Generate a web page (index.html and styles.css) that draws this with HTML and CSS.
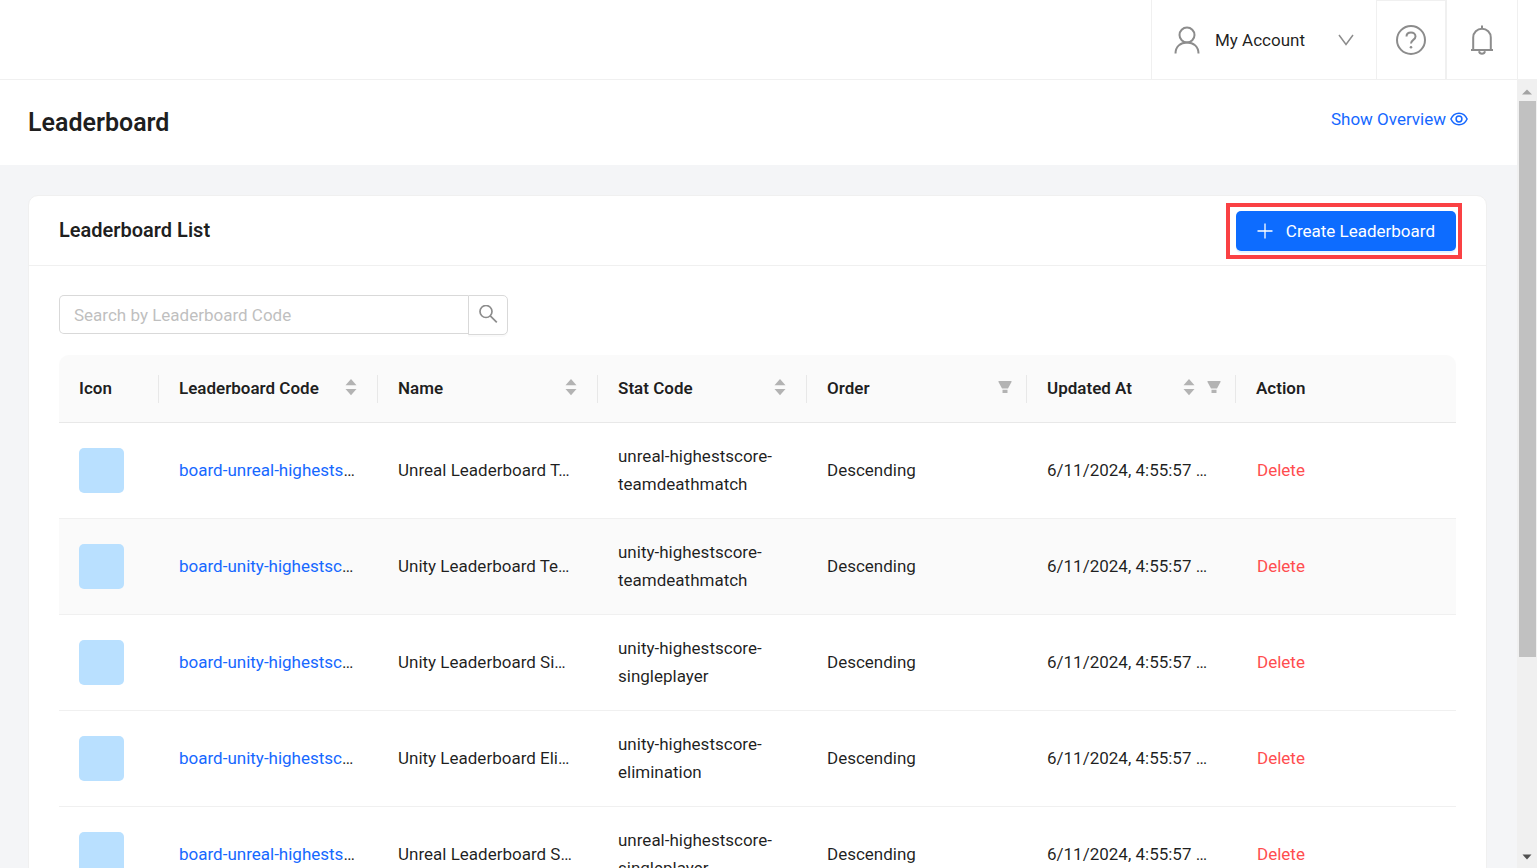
FILE: index.html
```html
<!DOCTYPE html>
<html lang="en">
<head>
<meta charset="utf-8">
<title>Leaderboard</title>
<link rel="stylesheet" href="styles.css">
</head>
<body>
<svg class="symbols" aria-hidden="true">
  <symbol id="sort" viewBox="0 0 12 18"><path d="M6 1l5.500 6.200H.5zM6 17.200l5.500-6.200H.5z"/></symbol>
  <symbol id="filter" viewBox="0 0 14 14"><path d="M.5 1h13v1L10 8.500H4L.5 2zM4.500 9.800h5v3.200h-5z"/></symbol>
</svg>
<header class="topbar">
  <button class="account" type="button">
    <svg class="icon-lg" viewBox="0 0 30 30"><circle cx="15" cy="10" r="7.500"/><path d="M3.500 28.500c0-7 5-11 11.500-11s11.500 4 11.500 11"/></svg>
    <span class="account-name">My Account</span>
    <svg class="chevron" viewBox="0 0 16 12"><path d="M1 1l7 9.500L15 1"/></svg>
  </button>
  <button class="tool tool-active" type="button" aria-label="Help">
    <svg class="icon-lg" viewBox="0 0 30 30"><circle cx="15" cy="15" r="14"/><path d="M10.500 11.500c0-2.500 2-4 4.500-4s4.500 1.600 4.500 4c0 3.500-4.500 3.200-4.500 7"/><circle class="dot" cx="15" cy="22.200" r="1.300"/></svg>
  </button>
  <button class="tool" type="button" aria-label="Notifications">
    <svg class="icon-lg" viewBox="0 0 30 30"><path d="M15 .5v3M6.200 25V12.500a8.800 8.800 0 0 1 17.600 0V25M4 25h22M12 26.200c.4 1.700 1.500 2.500 3 2.500s2.600-.8 3-2.500"/></svg>
  </button>
</header>
<div class="shell">
  <main class="content">
    <div class="page-head">
      <h1 class="page-title">Leaderboard</h1>
      <a class="overview" href="#overview">Show Overview
        <svg class="eye" viewBox="0 0 18 14"><path d="M.9 7C2.700 3 5.500 1.200 9 1.200S15.300 3 17.100 7C15.300 11 12.500 12.800 9 12.800S2.700 11 .9 7z"/><circle cx="9" cy="7" r="2.900"/></svg>
      </a>
    </div>
    <section class="card">
      <div class="card-head">
        <h2 class="card-title">Leaderboard List</h2>
        <div class="highlight">
          <button class="create" type="button">
            <svg class="plus" viewBox="0 0 16 16"><path d="M8 .5v15M.5 8h15"/></svg>
            <span>Create Leaderboard</span>
          </button>
        </div>
      </div>
      <div class="card-body">
        <form class="search">
          <input class="search-input" type="text" placeholder="Search by Leaderboard Code" aria-label="Search by Leaderboard Code">
          <button class="search-button" type="button" aria-label="Search">
            <svg class="magnifier" viewBox="0 0 20 20"><circle cx="8" cy="6.500" r="6"/><path d="M12.300 10.800l6.500 6.500"/></svg>
          </button>
        </form>
        <table class="table">
          <colgroup><col class="col-icon"><col class="col-code"><col class="col-wide"><col class="col-mid"><col class="col-wide"><col class="col-mid"><col></colgroup>
          <thead>
            <tr>
              <th>Icon</th>
              <th><div class="th">Leaderboard Code<svg class="sort"><use href="#sort"/></svg></div></th>
              <th><div class="th">Name<svg class="sort"><use href="#sort"/></svg></div></th>
              <th><div class="th">Stat Code<svg class="sort"><use href="#sort"/></svg></div></th>
              <th><div class="th th-filter">Order<svg class="filter"><use href="#filter"/></svg></div></th>
              <th><div class="th th-filter">Updated At<svg class="sort"><use href="#sort"/></svg><svg class="filter"><use href="#filter"/></svg></div></th>
              <th>Action</th>
            </tr>
          </thead>
          <tbody>
            <tr>
              <td><div class="thumb"></div></td>
              <td class="clip"><a class="link" href="#b1">board-unreal-highests</a>…</td>
              <td class="clip">Unreal Leaderboard T…</td>
              <td>unreal-highestscore-teamdeathmatch</td>
              <td>Descending</td>
              <td class="clip">6/11/2024, 4:55:57 …</td>
              <td><button class="delete" type="button">Delete</button></td>
            </tr>
            <tr class="hovered">
              <td><div class="thumb"></div></td>
              <td class="clip"><a class="link" href="#b2">board-unity-highestsc</a>…</td>
              <td class="clip">Unity Leaderboard Te…</td>
              <td>unity-highestscore-teamdeathmatch</td>
              <td>Descending</td>
              <td class="clip">6/11/2024, 4:55:57 …</td>
              <td><button class="delete" type="button">Delete</button></td>
            </tr>
            <tr>
              <td><div class="thumb"></div></td>
              <td class="clip"><a class="link" href="#b3">board-unity-highestsc</a>…</td>
              <td class="clip">Unity Leaderboard Si…</td>
              <td>unity-highestscore-singleplayer</td>
              <td>Descending</td>
              <td class="clip">6/11/2024, 4:55:57 …</td>
              <td><button class="delete" type="button">Delete</button></td>
            </tr>
            <tr>
              <td><div class="thumb"></div></td>
              <td class="clip"><a class="link" href="#b4">board-unity-highestsc</a>…</td>
              <td class="clip">Unity Leaderboard Eli…</td>
              <td>unity-highestscore-elimination</td>
              <td>Descending</td>
              <td class="clip">6/11/2024, 4:55:57 …</td>
              <td><button class="delete" type="button">Delete</button></td>
            </tr>
            <tr>
              <td><div class="thumb"></div></td>
              <td class="clip"><a class="link" href="#b5">board-unreal-highests</a>…</td>
              <td class="clip">Unreal Leaderboard S…</td>
              <td>unreal-highestscore-singleplayer</td>
              <td>Descending</td>
              <td class="clip">6/11/2024, 4:55:57 …</td>
              <td><button class="delete" type="button">Delete</button></td>
            </tr>
          </tbody>
        </table>
      </div>
    </section>
  </main>
  <div class="scrollbar" aria-hidden="true">
    <svg class="arrow" viewBox="0 0 20 20"><path fill="#a3a3a3" d="M10 9l5 5H5z"/></svg>
    <div class="track"><div class="thumb-bar"></div></div>
    <svg class="arrow" viewBox="0 0 20 20"><path fill="#505050" d="M5.500 7h9L10 12z"/></svg>
  </div>
</div>
</body>
</html>
```
FILE: styles.css
```css
* { box-sizing: border-box; }
body {
  margin: 0;
  height: 100vh;
  display: flex;
  flex-direction: column;
  overflow: hidden;
  background: #fff;
  color: rgba(0, 0, 0, 0.88);
  font: 400 17px/28px Roboto, sans-serif;
}
button, input { font: inherit; color: inherit; }
button { cursor: pointer; }
svg { flex: none; fill: none; stroke: none; }
.symbols { position: absolute; width: 0; height: 0; }

.topbar {
  display: flex;
  flex: none;
  justify-content: flex-end;
  height: 80px;
  padding-right: 19px;
  border-bottom: 1px solid #f0f0f0;
}
.account, .tool {
  display: flex;
  align-items: center;
  padding: 0;
  border: 0 solid #f0f0f0;
  background: none;
}
.account { border-left-width: 1px; width: 225px; padding: 0 22px 0 20px; }
.account-name { margin: 0 auto 0 13px; }
.tool { justify-content: center; width: 71px; border-right-width: 1px; }
.tool-active { border-width: 1px 2px 0 1px; }
.icon-lg { width: 30px; height: 30px; stroke: #8c8c8c; stroke-width: 2; }
.dot { fill: #8c8c8c; stroke: none; }
.chevron { width: 16px; height: 12px; stroke: #8c8c8c; stroke-width: 1.5; }

.shell { display: flex; flex: 1; min-height: 0; }
.content { flex: 1; min-width: 0; overflow: hidden; background: #f4f5f7; }
.page-head {
  display: flex;
  justify-content: space-between;
  align-items: flex-start;
  height: 85px;
  padding: 25px 49px 0 28px;
  background: #fff;
}
.page-title { margin: 0; font-size: 25px; line-height: 36px; font-weight: 600; }
.overview { display: flex; align-items: center; gap: 4px; color: #1668ff; text-decoration: none; }
.eye { width: 18px; height: 14px; stroke: currentColor; stroke-width: 1.5; }

.card {
  margin: 30px 30px 0 28px;
  border: 1px solid #f0f0f0;
  border-radius: 10px;
  background: #fff;
}
.card-head {
  display: flex;
  justify-content: space-between;
  align-items: center;
  height: 70px;
  padding: 0 30px;
  border-bottom: 1px solid #f0f0f0;
}
.card-title { margin: 0 0 2px; font-size: 20px; font-weight: 600; }
.highlight { position: relative; }
.highlight::after {
  content: "";
  position: absolute;
  inset: -8px -6px -8px -10px;
  border: 4px solid #fa4144;
  pointer-events: none;
}
.create {
  display: flex;
  align-items: center;
  gap: 13px;
  height: 40px;
  padding: 0 21px;
  border: 0;
  border-radius: 5px;
  background: #0d6cff;
  box-shadow: 0 2px 0 rgba(5, 145, 255, 0.1);
  color: #fff;
}
.plus { width: 16px; height: 16px; stroke: #fff; stroke-width: 1.3; }
.card-body { padding: 29px 30px; }

.search { display: flex; align-items: flex-start; width: 449px; margin-bottom: 20px; }
.search-input {
  flex: 1;
  min-width: 0;
  height: 39px;
  padding: 0 14px;
  border: 1px solid #d9d9d9;
  border-right: 0;
  border-radius: 5px 0 0 5px;
}
.search-input::placeholder { color: #bfbfbf; opacity: 1; }
.search-button {
  display: flex;
  align-items: center;
  justify-content: center;
  width: 40px;
  height: 40px;
  padding: 0;
  border: 1px solid #d9d9d9;
  border-radius: 0 5px 5px 0;
  background: #fff;
  box-shadow: 0 2px 0 rgba(0, 0, 0, 0.02);
}
.magnifier { width: 20px; height: 20px; stroke: #8c8c8c; stroke-width: 1.7; }

.table { width: 100%; table-layout: fixed; border-collapse: separate; border-spacing: 0; }
.col-icon { width: 100px; }
.col-code { width: 219px; }
.col-wide { width: 220px; }
.col-mid { width: 209px; }
.table th, .table td { padding: 19px 20px 20px; border-bottom: 1px solid #f0f0f0; text-align: left; }
.table th { position: relative; background: #fafafa; border-bottom-color: #e8e8e8; font-weight: 600; white-space: nowrap; }
.table th:first-child { border-top-left-radius: 10px; }
.table th:last-child { border-top-right-radius: 10px; }
.table th:not(:last-child)::after {
  content: "";
  position: absolute;
  top: 20px;
  right: 0;
  width: 1px;
  height: 28px;
  background: #e8e8e8;
}
.th { display: flex; align-items: center; padding-right: 1px; }
.th-filter { margin-right: -6px; }
.sort { width: 12px; height: 18px; margin: 0 0 2px auto; fill: #b3b3b3; }
.filter { width: 14px; height: 14px; margin: 0 0 2px auto; fill: #b3b3b3; }
.sort + .filter { margin-left: 12px; }
.hovered td { background: #fafafa; }
.clip { overflow: hidden; white-space: nowrap; }
.thumb { width: 45px; height: 45px; border-radius: 5px; background: #b9e0ff; }
.link { color: #1668ff; text-decoration: none; }
.delete { display: block; padding: 0 1px; border: 0; background: none; color: #ff4d4f; }

.scrollbar { display: flex; flex: none; flex-direction: column; width: 20px; background: #f0f0f0; }
.arrow { width: 20px; height: 21px; }
.track { flex: 1; padding: 0 1px 0 2px; }
.thumb-bar { height: 74.5%; background: #c1c1c1; }
```
